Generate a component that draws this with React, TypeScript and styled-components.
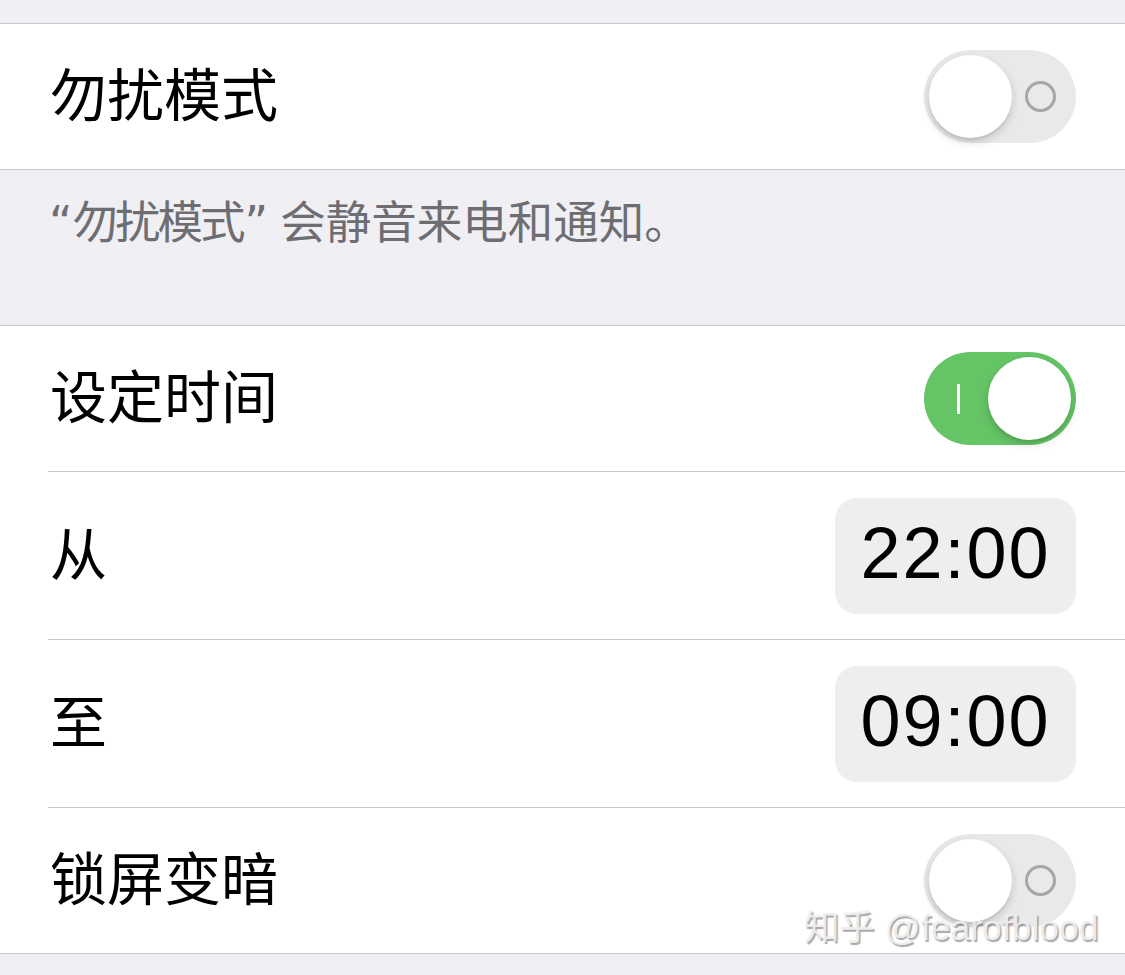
import React from "react";
import styled, { createGlobalStyle } from "styled-components";

const GlobalStyle = createGlobalStyle`
  html, body {
    margin: 0;
    padding: 0;
    background: #efeff4;
  }
  body {
    font-family: "Noto Sans CJK SC", "Noto Sans", sans-serif;
    -webkit-font-smoothing: antialiased;
  }
`;

const Page = styled.div`
  position: relative;
  width: 1125px;
  height: 975px;
  overflow: hidden;
  background: #efeff4;
  padding-top: 23px;
  box-sizing: border-box;
`;

const Section = styled.div`
  background: #fff;
  border-top: 1px solid #c8c7cc;
  border-bottom: 1px solid #c8c7cc;
`;

const Cell = styled.div<{ $tall?: boolean }>`
  display: flex;
  align-items: center;
  justify-content: space-between;
  height: ${(p) => (p.$tall ? 167 : 145)}px;
  padding: 0 49px 0 48px;

  & + & {
    border-top: 1px solid #c8c7cc;
    margin-left: 48px;
    padding-left: 0;
  }
`;

const Label = styled.span`
  font-family: "Noto Sans CJK SC", sans-serif;
  font-size: 57px;
  line-height: 1;
  color: #000;
  padding-left: 2px;
  margin-bottom: 10px;
`;

const Note = styled.div`
  height: 155px;
  box-sizing: border-box;
  padding: 22px 0 0 48px;
  font-family: "Noto Sans CJK SC", sans-serif;
  font-size: 45.5px;
  line-height: 1.2;
  color: #6d6d72;
  white-space: nowrap;
`;

// latin curly quotes, narrower than the CJK full-width ones
const Quote = styled.span<{ $close?: boolean }>`
  font-family: "DejaVu Sans", sans-serif;
  margin: ${(p) => (p.$close ? "0 12px 0 2px" : "0 0 0 1px")};
`;

const Quoted = styled.span`
  letter-spacing: -3px;
`;

const Track = styled.div<{ $on: boolean }>`
  position: relative;
  width: 152px;
  height: 93px;
  border-radius: 47px;
  background: ${(p) => (p.$on ? "#65c466" : "#e9e9eb")};
  flex-shrink: 0;
`;

const Knob = styled.div<{ $on: boolean }>`
  position: absolute;
  top: 5px;
  left: ${(p) => (p.$on ? 64 : 5)}px;
  width: 83px;
  height: 83px;
  border-radius: 50%;
  background: #fff;
  box-shadow: 0 4px 10px rgba(0, 0, 0, 0.16), 0 3px 1px rgba(0, 0, 0, 0.05);
`;

const OffMark = styled.div`
  position: absolute;
  left: 101px;
  top: 31px;
  width: 25px;
  height: 25px;
  border: 3px solid #a6a6a8;
  border-radius: 50%;
`;

const OnMark = styled.div`
  position: absolute;
  left: 33px;
  top: 32px;
  width: 3px;
  height: 30px;
  background: #fff;
`;

const TimePill = styled.div`
  display: flex;
  align-items: center;
  justify-content: center;
  width: 241px;
  height: 116px;
  border-radius: 22px;
  background: #eeeef0;
  font-family: "Liberation Sans", Arial, sans-serif;
  font-size: 72px;
  color: #000;
  letter-spacing: 2px;
  padding-bottom: 6px;
  box-sizing: border-box;
`;

const Watermark = styled.div`
  position: absolute;
  left: 804px;
  top: 911px;
  font-family: "Liberation Sans", "Noto Sans CJK SC", sans-serif;
  font-size: 35.5px;
  line-height: 1;
  color: rgba(238, 238, 238, 0.95);
  text-shadow: 1.5px 1.5px 1px rgba(0, 0, 0, 0.35);
  white-space: nowrap;
`;

const Switch = ({ on }: { on: boolean }) => (
  <Track $on={on}>
    {on ? <OnMark /> : <OffMark />}
    <Knob $on={on} />
  </Track>
);

const App = () => {
  return (
    <Page>
      <GlobalStyle />
      <Section>
        <Cell>
          <Label>勿扰模式</Label>
          <Switch on={false} />
        </Cell>
      </Section>
      <Note>
        <Quote>“</Quote>
        <Quoted>勿扰模式</Quoted>
        <Quote $close>”</Quote>会静音来电和通知。
      </Note>
      <Section>
        <Cell>
          <Label>设定时间</Label>
          <Switch on={true} />
        </Cell>
        <Cell $tall>
          <Label>从</Label>
          <TimePill>22:00</TimePill>
        </Cell>
        <Cell $tall>
          <Label>至</Label>
          <TimePill>09:00</TimePill>
        </Cell>
        <Cell>
          <Label>锁屏变暗</Label>
          <Switch on={false} />
        </Cell>
      </Section>
      <Watermark>知乎 @fearofblood</Watermark>
    </Page>
  );
};

export default App;
